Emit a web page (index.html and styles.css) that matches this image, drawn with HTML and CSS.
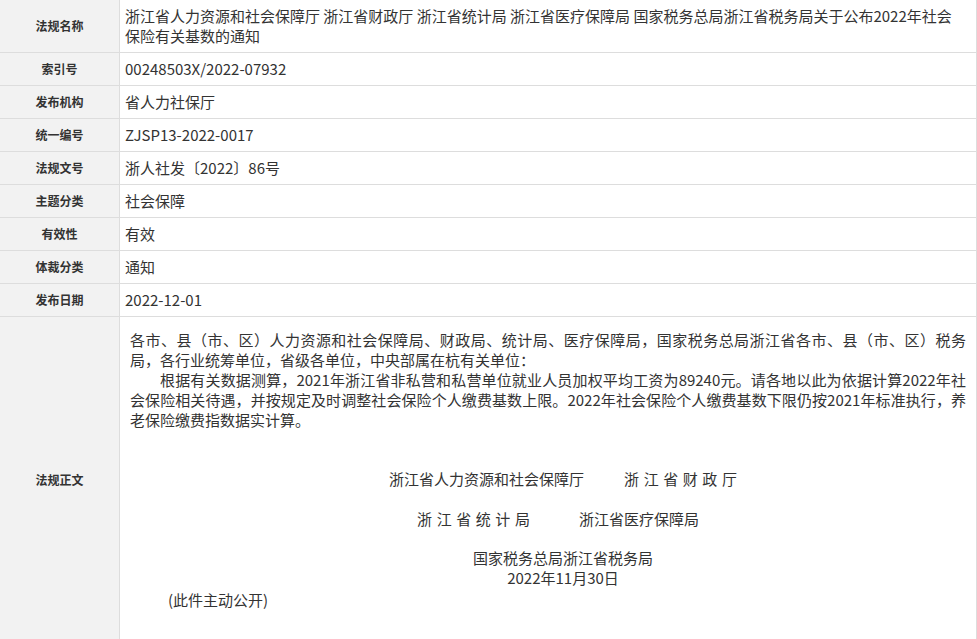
FILE: index.html
```html
<!DOCTYPE html>
<html lang="zh-CN">
<head>
<meta charset="utf-8">
<title>法规详情</title>
<link rel="stylesheet" href="styles.css">
</head>
<body>
<div class="table">
  <div class="row">
    <div class="label">法规名称</div>
    <div class="value value-title">浙江省人力资源和社会保障厅 浙江省财政厅 浙江省统计局 浙江省医疗保障局 国家税务总局浙江省税务局关于公布2022年社会保险有关基数的通知</div>
  </div>
  <div class="row">
    <div class="label">索引号</div>
    <div class="value">00248503X/2022-07932</div>
  </div>
  <div class="row">
    <div class="label">发布机构</div>
    <div class="value">省人力社保厅</div>
  </div>
  <div class="row">
    <div class="label">统一编号</div>
    <div class="value">ZJSP13-2022-0017</div>
  </div>
  <div class="row">
    <div class="label">法规文号</div>
    <div class="value">浙人社发〔2022〕86号</div>
  </div>
  <div class="row">
    <div class="label">主题分类</div>
    <div class="value">社会保障</div>
  </div>
  <div class="row">
    <div class="label">有效性</div>
    <div class="value">有效</div>
  </div>
  <div class="row">
    <div class="label">体裁分类</div>
    <div class="value">通知</div>
  </div>
  <div class="row">
    <div class="label">发布日期</div>
    <div class="value">2022-12-01</div>
  </div>
  <div class="row">
    <div class="label">法规正文</div>
    <div class="value body-text">
      <p class="para">各市、县（市、区）人力资源和社会保障局、财政局、统计局、医疗保障局，国家税务总局浙江省各市、县（市、区）税务局，各行业统筹单位，省级各单位，中央部属在杭有关单位：</p>
      <p class="para indent">根据有关数据测算，2021年浙江省非私营和私营单位就业人员加权平均工资为89240元。请各地以此为依据计算2022年社会保险相关待遇，并按规定及时调整社会保险个人缴费基数上限。2022年社会保险个人缴费基数下限仍按2021年标准执行，养老保险缴费指数据实计算。</p>
      <div class="signatures">
        <div class="sig-line sig-first">
          <span>浙江省人力资源和社会保障厅</span>
          <span class="spaced">浙 江 省 财 政 厅</span>
        </div>
        <div class="sig-line sig-second">
          <span class="spaced">浙 江 省 统 计 局</span>
          <span>浙江省医疗保障局</span>
        </div>
        <div class="sig-line sig-third">
          <span>国家税务总局浙江省税务局</span>
        </div>
        <div class="sig-line">
          <span>2022年11月30日</span>
        </div>
      </div>
      <p class="para public">(此件主动公开)</p>
    </div>
  </div>
</div>
</body>
</html>
```

FILE: styles.css
```css
html, body {
  margin: 0;
  padding: 0;
  background: #ffffff;
}

body {
  font-family: "Noto Sans CJK SC", "Microsoft YaHei", sans-serif;
  color: #333333;
}

.table {
  width: 977px;
  box-sizing: border-box;
  border-right: 1px solid #dddddd;
}

.row {
  display: flex;
  border-bottom: 1px solid #dddddd;
}

.label {
  width: 119px;
  flex: none;
  background: #f2f2f2;
  border-right: 1px solid #dddddd;
  display: flex;
  align-items: center;
  justify-content: center;
  font-size: 12px;
  font-weight: bold;
  line-height: 20px;
  color: #333333;
}

.value {
  flex: 1;
  min-width: 0;
  padding: 6px 5px;
  font-size: 15px;
  line-height: 20px;
}

.value-title {
  padding-right: 12px;
}

.body-text {
  padding: 13px 10px 32px 10px;
  text-align: justify;
}

.para {
  margin: 0;
}

.indent {
  text-indent: 2em;
}

.signatures {
  margin-top: 39px;
  padding-left: 30px;
}

.sig-line {
  display: flex;
  justify-content: center;
  gap: 40px;
  white-space: nowrap;
}

.sig-second {
  margin-top: 20px;
  gap: 49px;
  padding-right: 10px;
}

.sig-third {
  margin-top: 19px;
}

.spaced {
  word-spacing: 1.2px;
}

.public {
  margin-top: 2px;
  padding-left: 38px;
  text-align: left;
}
```
